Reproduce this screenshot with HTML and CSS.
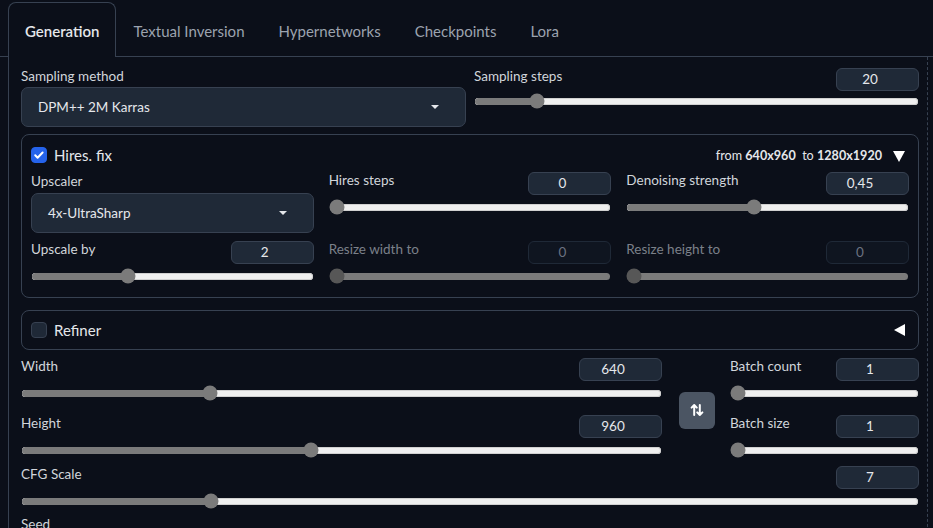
FILE: index.html
```html
<!DOCTYPE html>
<html>
<head>
<meta charset="utf-8">
<title>Generation</title>
<link rel="stylesheet" href="styles.css">
</head>
<body>
<div class="tabs">
  <div class="tab-nav">
    <div class="tab active">Generation</div>
    <div class="tab">Textual Inversion</div>
    <div class="tab">Hypernetworks</div>
    <div class="tab">Checkpoints</div>
    <div class="tab">Lora</div>
  </div>
  <div class="tab-body">
    <div class="row-top">
      <div class="field">
        <div class="label">Sampling method</div>
        <div class="dropdown"><span>DPM++ 2M Karras</span><span class="caret"></span></div>
      </div>
      <div class="slider-block">
        <div class="slider-head"><span class="label">Sampling steps</span><span class="num">20</span></div>
        <div class="slider short"><div class="track"><div class="fill" style="--p:0.1275"></div><div class="thumb" style="--p:0.1275"></div></div></div>
      </div>
    </div>

    <div class="panel hires">
      <div class="panel-head">
        <span class="check on"><svg viewBox="0 0 16 16" width="16" height="16"><path d="M4.2 8.3l2.4 2.4 5-5.2" fill="none" stroke="#fff" stroke-width="2" stroke-linecap="round" stroke-linejoin="round"/></svg></span>
        <span class="panel-title">Hires. fix</span>
        <span class="spacer"></span>
        <span class="res">from <b>640x960</b>&nbsp; to <b>1280x1920</b></span>
        <span class="tri-down"></span>
      </div>
      <div class="grid3">
        <div class="field">
          <div class="label">Upscaler</div>
          <div class="dropdown"><span>4x-UltraSharp</span><span class="caret"></span></div>
        </div>
        <div class="slider-block">
          <div class="slider-head"><span class="label">Hires steps</span><span class="num">0</span></div>
          <div class="slider"><div class="track"><div class="fill" style="--p:0"></div><div class="thumb" style="--p:0"></div></div></div>
        </div>
        <div class="slider-block">
          <div class="slider-head"><span class="label">Denoising strength</span><span class="num">0,45</span></div>
          <div class="slider"><div class="track"><div class="fill" style="--p:0.45"></div><div class="thumb" style="--p:0.45"></div></div></div>
        </div>
        <div class="slider-block">
          <div class="slider-head"><span class="label">Upscale by</span><span class="num">2</span></div>
          <div class="slider"><div class="track"><div class="fill" style="--p:0.3333"></div><div class="thumb" style="--p:0.3333"></div></div></div>
        </div>
        <div class="slider-block disabled">
          <div class="slider-head"><span class="label">Resize width to</span><span class="num">0</span></div>
          <div class="slider"><div class="track"><div class="fill" style="--p:0"></div><div class="thumb" style="--p:0"></div></div></div>
        </div>
        <div class="slider-block disabled">
          <div class="slider-head"><span class="label">Resize height to</span><span class="num">0</span></div>
          <div class="slider"><div class="track"><div class="fill" style="--p:0"></div><div class="thumb" style="--p:0"></div></div></div>
        </div>
      </div>
    </div>

    <div class="panel refiner">
      <div class="panel-head">
        <span class="check"></span>
        <span class="panel-title">Refiner</span>
        <span class="spacer"></span>
        <span class="tri-left"></span>
      </div>
    </div>

    <div class="dims">
      <div class="dims-col wide">
        <div class="slider-block">
          <div class="slider-head"><span class="label">Width</span><span class="num">640</span></div>
          <div class="slider"><div class="track"><div class="fill" style="--p:0.2903"></div><div class="thumb" style="--p:0.2903"></div></div></div>
        </div>
        <div class="slider-block">
          <div class="slider-head"><span class="label">Height</span><span class="num">960</span></div>
          <div class="slider"><div class="track"><div class="fill" style="--p:0.4516"></div><div class="thumb" style="--p:0.4516"></div></div></div>
        </div>
      </div>
      <div class="swap">
        <svg viewBox="0 0 16 16" width="16" height="16"><path d="M5.2 13V3M2.6 5.6L5.2 3l2.6 2.6M10.8 3v10M8.2 10.4l2.6 2.6 2.6-2.6" fill="none" stroke="#fff" stroke-width="2" stroke-linecap="round" stroke-linejoin="round"/></svg>
      </div>
      <div class="dims-col narrow">
        <div class="slider-block">
          <div class="slider-head"><span class="label">Batch count</span><span class="num">1</span></div>
          <div class="slider"><div class="track"><div class="fill" style="--p:0"></div><div class="thumb" style="--p:0"></div></div></div>
        </div>
        <div class="slider-block">
          <div class="slider-head"><span class="label">Batch size</span><span class="num">1</span></div>
          <div class="slider"><div class="track"><div class="fill" style="--p:0"></div><div class="thumb" style="--p:0"></div></div></div>
        </div>
      </div>
    </div>

    <div class="slider-block cfg">
      <div class="slider-head"><span class="label">CFG Scale</span><span class="num">7</span></div>
      <div class="slider"><div class="track"><div class="fill" style="--p:0.2069"></div><div class="thumb" style="--p:0.2069"></div></div></div>
    </div>
    <div class="label seed">Seed</div>
  </div>
</div>
</body>
</html>
```

FILE: styles.css
```css
* { box-sizing: border-box; }
html, body { margin: 0; padding: 0; }
body {
  background: #0b0f19;
  color: #d1d5db;
  font-family: Lato, "Noto Sans", "Liberation Sans", sans-serif;
  font-size: 14px;
  width: 933px;
  height: 528px;
  overflow: hidden;
}
.tabs { padding-top: 2px; }
.tab-nav {
  display: flex;
  padding-left: 8px;
  border-bottom: 1px solid #374151;
  height: 55px;
}
.tab {
  height: 54px;
  padding: 2px 16px 0;
  display: flex;
  align-items: center;
  font-size: 15px;
  color: #9ca3af;
  border: 1px solid transparent;
  border-bottom: none;
}
.tab.active {
  color: #e5e7eb;
  font-weight: 600;
  border-color: #374151;
  border-radius: 8px 8px 0 0;
  background: #0b0f19;
  height: 55px;
  padding: 2px 16px 0 16px;
  position: relative;
  z-index: 1;
}
.tab-body {
  margin-left: 8px;
  width: 920px;
  height: 480px;
  border-left: 1px solid #374151;
  border-right: 1px dashed #374151;
  padding: 11px 8px 0 12px;
}
.label {
  display: block;
  font-size: 13.5px;
  line-height: 16px;
  color: #d1d5db;
  white-space: nowrap;
}
.row-top {
  display: grid;
  grid-template-columns: 1fr 1fr;
  column-gap: 8px;
}
.field .label { margin-bottom: 3px; }
.dropdown {
  height: 40px;
  background: #1f2937;
  border: 1px solid #374151;
  border-radius: 7px;
  display: flex;
  align-items: center;
  justify-content: space-between;
  padding: 0 26px 0 16px;
  font-size: 13.5px;
  color: #e5e7eb;
}
.caret {
  width: 0; height: 0;
  border-left: 4.5px solid transparent;
  border-right: 4.5px solid transparent;
  border-top: 4.5px solid #e5e7eb;
}
.slider-head {
  display: flex;
  justify-content: space-between;
  align-items: flex-start;
  height: 23px;
}
.num {
  width: 83px;
  height: 23px;
  background: #1f2937;
  border: 1px solid #374151;
  border-radius: 6px;
  text-align: center;
  padding-right: 15px;
  font-size: 13.5px;
  line-height: 21px;
  color: #e5e7eb;
}
.slider {
  height: 24px;
  display: flex;
  align-items: center;
  padding: 0 1px;
}
.slider.short { height: 20px; }
.track {
  position: relative;
  width: 100%;
  height: 7px;
  border-radius: 4px;
  background: #efefef;
  box-shadow: inset 0 0 0 1px #d0d0d0;
}
.fill {
  position: absolute;
  left: 0; top: 0; bottom: 0;
  width: calc(7px + (100% - 14px) * var(--p));
  background: #7b7b7b;
  border-radius: 4px 0 0 4px;
}
.thumb {
  position: absolute;
  top: 50%;
  left: calc(7px + (100% - 14px) * var(--p));
  width: 15px;
  height: 15px;
  border-radius: 50%;
  background: #7b7b7b;
  transform: translate(-50%, -50%);
}
.disabled .label { color: #7b8089; }
.disabled .num { background: #0f1520; border-color: #1f2937; color: #6b7280; }
.disabled .track { background: #7b7b7b; box-shadow: none; }
.disabled .thumb { background: #575757; }

.panel {
  border: 1px solid #374151;
  border-radius: 8px;
}
.hires {
  margin-top: 7px;
  padding: 12px 9px 9px;
}
.panel-head {
  display: flex;
  align-items: center;
  height: 16px;
}
.check {
  width: 16px;
  height: 16px;
  border-radius: 4px;
  background: #1f2937;
  border: 1px solid #374151;
  display: flex;
}
.check.on { background: #2563eb; border-color: #2563eb; }
.check svg { margin: -1px; }
.panel-title {
  margin-left: 7px;
  font-size: 15px;
  color: #e5e7eb;
}
.spacer { flex: 1; }
.res { font-size: 12.6px; color: #e5e7eb; }
.res b { font-weight: 700; }
.tri-down {
  margin-left: 11px;
  margin-right: 4px;
  width: 0; height: 0;
  border-left: 6.5px solid transparent;
  border-right: 6.5px solid transparent;
  border-top: 11px solid #ffffff;
  margin-top: 2px;
}
.tri-left {
  margin-right: 4px;
  width: 0; height: 0;
  border-top: 6.5px solid transparent;
  border-bottom: 6.5px solid transparent;
  border-right: 11px solid #ffffff;
}
.grid3 {
  margin-top: 9px;
  display: grid;
  grid-template-columns: 1fr 1fr 1fr;
  column-gap: 15px;
  row-gap: 8px;
}
.grid3 .field .label { margin-bottom: 4px; margin-top: 1px; }
.grid3 .field .dropdown { height: 40px; }
.refiner {
  margin-top: 12px;
  height: 40px;
  padding: 0 9px;
  display: flex;
  align-items: center;
}
.refiner .panel-head { width: 100%; }
.dims {
  margin-top: 8px;
  display: flex;
  align-items: center;
}
.dims-col { display: flex; flex-direction: column; gap: 10px; }
.dims-col.wide { width: 641px; }
.dims-col.narrow { width: 189px; margin-left: 15px; }
.swap {
  margin-left: 17px;
  width: 36px;
  height: 37px;
  border-radius: 6px;
  background: #4b5563;
  display: flex;
  align-items: center;
  justify-content: center;
}
.cfg { margin-top: 4px; }
.seed { margin-top: 3px; }
```
